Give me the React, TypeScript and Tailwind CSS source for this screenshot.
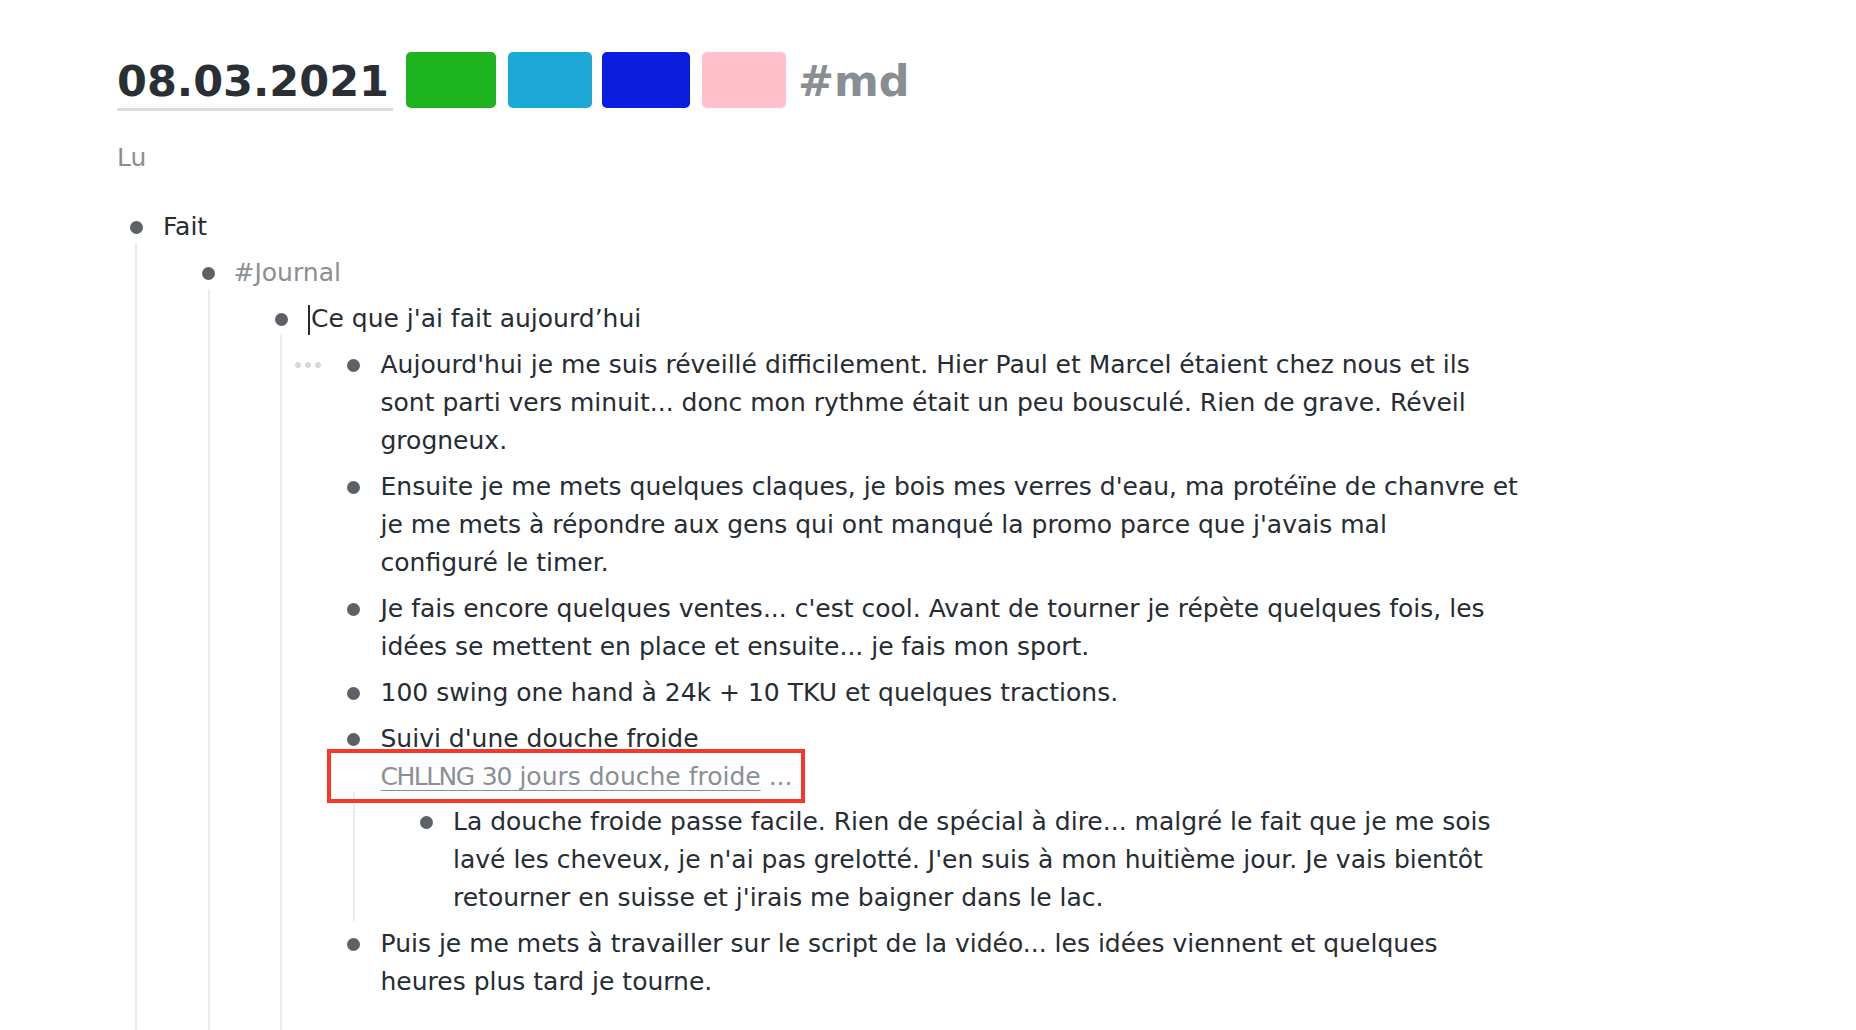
import React from "react";

// One block of the outline: a bullet, its text, and its nested children
interface OutlineNode {
  content: React.ReactNode;
  children?: OutlineNode[];
  dots?: boolean;
  tall?: boolean;
}

const outline: OutlineNode[] = [
  {
    content: "Fait",
    tall: true,
    children: [
      {
        content: <span className="-ml-[2px] text-[#8a8f94]">#Journal</span>,
        tall: true,
        children: [
          {
            content: (
              <>
                <span className="mr-[1px] inline-block h-[30px] w-[2px] bg-[#262c33] align-middle" />
                Ce que j'ai fait aujourd’hui
              </>
            ),
            tall: true,
            children: [
              {
                dots: true,
                content:
                  "Aujourd'hui je me suis réveillé difficilement. Hier Paul et Marcel étaient chez nous et ils sont parti vers minuit... donc mon rythme était un peu bousculé. Rien de grave. Réveil grogneux.",
              },
              {
                content: (
                  <>
                    Ensuite je me mets quelques claques, je bois mes verres d'eau, ma protéïne de chanvre et je
                    me mets à répondre aux gens qui ont manqué la promo parce que j'avais mal
                    <br />
                    configuré le timer.
                  </>
                ),
              },
              {
                content:
                  "Je fais encore quelques ventes... c'est cool. Avant de tourner je répète quelques fois, les idées se mettent en place et ensuite... je fais mon sport.",
              },
              {
                content: "100 swing one hand à 24k + 10 TKU et quelques tractions.",
              },
              {
                content: (
                  <>
                    <div>Suivi d'une douche froide</div>
                    <div className="relative leading-[37px] text-[#8a8f94]">
                      <span className="underline decoration-1 underline-offset-[5px]">
                        <span className="tracking-[-1.5px]">CHLLNG</span>{" "}
                        <span className="tracking-[-1px]">30</span> jours douche froide
                      </span>{" "}
                      ...
                      <div className="pointer-events-none absolute -left-[54px] -top-[9px] h-[54px] w-[478px] border-[4px] border-[#f8362a]" />
                    </div>
                  </>
                ),
                children: [
                  {
                    content:
                      "La douche froide passe facile. Rien de spécial à dire... malgré le fait que je me sois lavé les cheveux, je n'ai pas grelotté. J'en suis à mon huitième jour. Je vais bientôt retourner en suisse et j'irais me baigner dans le lac.",
                  },
                ],
              },
              {
                content:
                  "Puis je me mets à travailler sur le script de la vidéo... les idées viennent et quelques heures plus tard je tourne.",
              },
            ],
          },
        ],
      },
    ],
  },
];

const Block: React.FC<{ node: OutlineNode }> = ({ node }) => (
  <div>
    <div className="relative flex items-start py-[4px]">
      {node.dots && (
        <div className="absolute -left-[30px] top-[4px] flex h-[38px] items-center gap-[3.5px]">
          <span className="h-[6.5px] w-[6.5px] rounded-full bg-[#d6d9dc]" />
          <span className="h-[6.5px] w-[6.5px] rounded-full bg-[#d6d9dc]" />
          <span className="h-[6.5px] w-[6.5px] rounded-full bg-[#d6d9dc]" />
        </div>
      )}
      <div className="flex h-[38px] w-[56px] shrink-0 items-center pl-[22.5px]">
        <span className="h-[13px] w-[13px] rounded-full bg-[#5c6168]" />
      </div>
      <div className="min-w-0 flex-1">{node.content}</div>
    </div>
    {node.children && (
      <div
        className={`-mt-[7px] ml-[28px] border-l-2 border-[#ececec] pl-[42.5px] pt-[7px] ${
          node.tall ? "pb-[30px]" : ""
        }`}>
        {node.children.map((child, i) => (
          <Block key={i} node={child} />
        ))}
      </div>
    )}
  </div>
);

export default function App() {
  return (
    <div className="h-[1030px] overflow-hidden bg-white font-['DejaVu_Sans',sans-serif] text-[25px] leading-[38px] text-[#262c33]">
      {/* --- page title with colour tags --- */}
      <div className="flex items-start pl-[117px] pt-[52px]">
        <h1 className="border-b-[3px] border-[#dddddd] pb-[2px] pr-[4px] pt-[4px] text-[43px] font-bold leading-[50px] text-[#2a2f35]">
          08.03.2021
        </h1>
        <span className="ml-[13px] h-[56px] w-[90px] rounded-[5px] bg-[#1db420]" />
        <span className="ml-[12px] h-[56px] w-[84px] rounded-[5px] bg-[#1da9d8]" />
        <span className="ml-[10px] h-[56px] w-[88px] rounded-[5px] bg-[#0a1cdc]" />
        <span className="ml-[12px] h-[56px] w-[84px] rounded-[5px] bg-[#ffc0cb]" />
        <span className="ml-[12px] pt-[4px] text-[43px] font-bold leading-[50px] text-[#898e92]">
          #md
        </span>
      </div>

      <div className="mt-[28px] pl-[117px] text-[#8a8f94]">Lu</div>

      {/* --- outline --- */}
      <div className="ml-[107px] mt-[27px] w-[1418px]">
        {outline.map((node, i) => (
          <Block key={i} node={node} />
        ))}
      </div>
    </div>
  );
}
